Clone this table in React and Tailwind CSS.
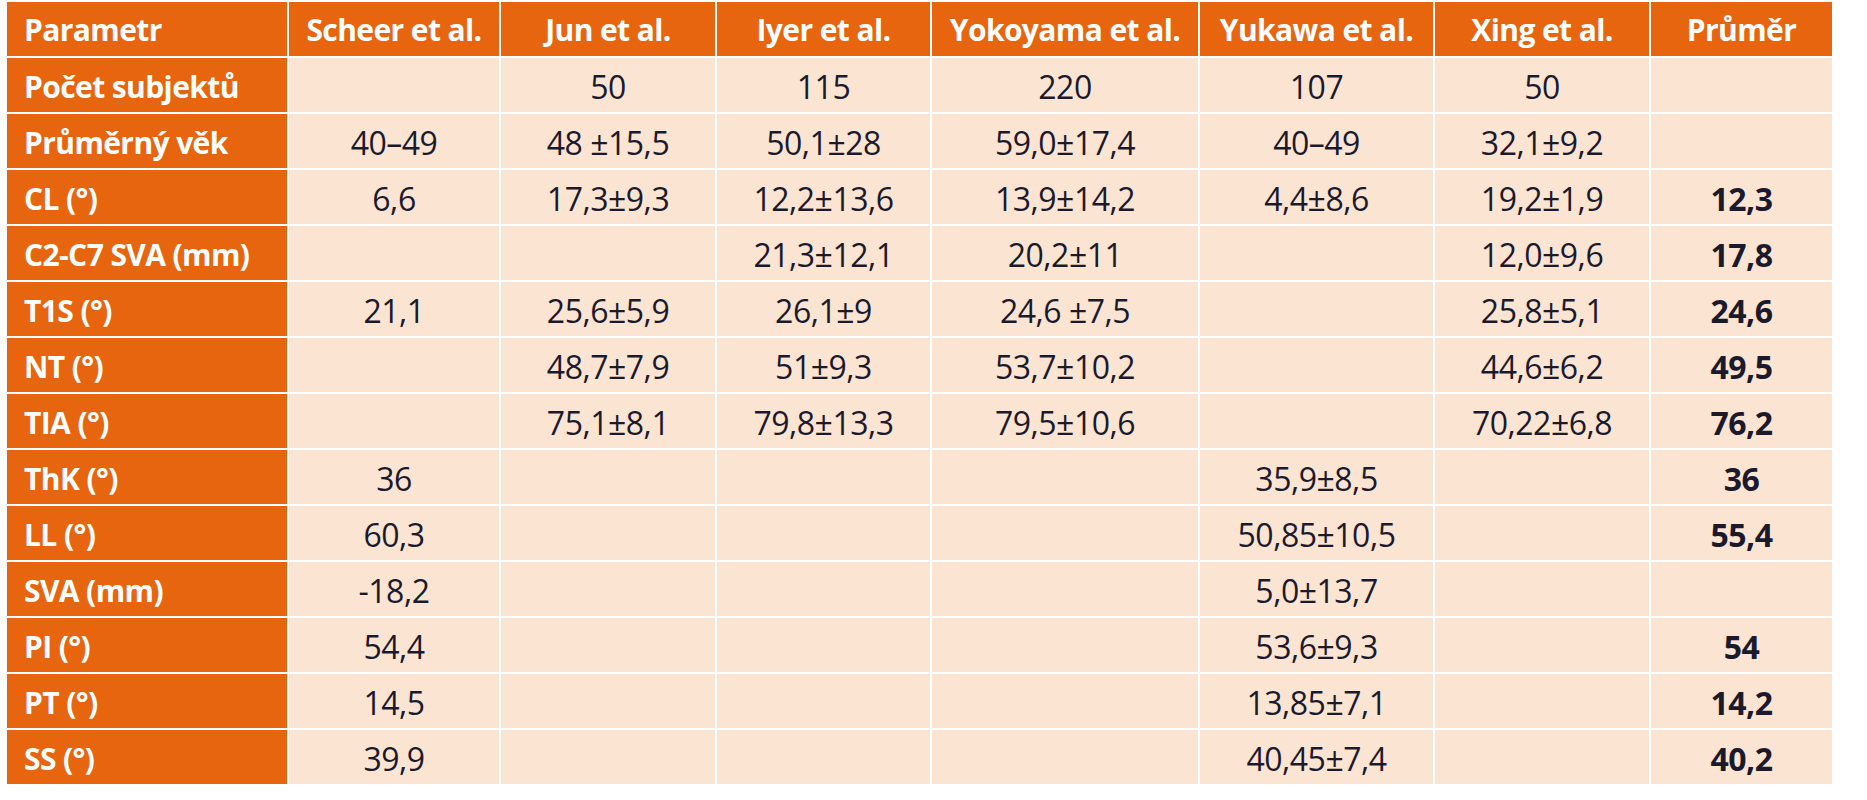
import React from "react";

const headers = ["Parametr", "Scheer et al.", "Jun et al.", "Iyer et al.", "Yokoyama et al.", "Yukawa et al.", "Xing et al.", "Průměr"];

const rows = [
  ["Počet subjektů", "", "50", "115", "220", "107", "50", ""],
  ["Průměrný věk", "40–49", "48 ±15,5", "50,1±28", "59,0±17,4", "40–49", "32,1±9,2", ""],
  ["CL (°)", "6,6", "17,3±9,3", "12,2±13,6", "13,9±14,2", "4,4±8,6", "19,2±1,9", "12,3"],
  ["C2-C7 SVA (mm)", "", "", "21,3±12,1", "20,2±11", "", "12,0±9,6", "17,8"],
  ["T1S (°)", "21,1", "25,6±5,9", "26,1±9", "24,6 ±7,5", "", "25,8±5,1", "24,6"],
  ["NT (°)", "", "48,7±7,9", "51±9,3", "53,7±10,2", "", "44,6±6,2", "49,5"],
  ["TIA (°)", "", "75,1±8,1", "79,8±13,3", "79,5±10,6", "", "70,22±6,8", "76,2"],
  ["ThK (°)", "36", "", "", "", "35,9±8,5", "", "36"],
  ["LL (°)", "60,3", "", "", "", "50,85±10,5", "", "55,4"],
  ["SVA (mm)", "-18,2", "", "", "", "5,0±13,7", "", ""],
  ["PI (°)", "54,4", "", "", "", "53,6±9,3", "", "54"],
  ["PT (°)", "14,5", "", "", "", "13,85±7,1", "", "14,2"],
  ["SS (°)", "39,9", "", "", "", "40,45±7,4", "", "40,2"],
];

export default function App() {
  return (
    <div className="min-h-[800px] w-[1867px] bg-white pt-[2px] pl-[7px]" style={{ fontFamily: '"Open Sans", "Noto Sans", sans-serif' }}>
      <div className="grid grid-cols-[280px_210px_214px_213px_266px_233px_214px_181px] gap-[2px] auto-rows-[54px]">
        {headers.map((h, i) => (
          <div
            key={"h" + i}
            className={
              "flex items-center bg-[#e8650f] text-white font-bold text-[30px] tracking-[-0.6px] " +
              (i === 0 ? "justify-start pl-[17px]" : "justify-center")
            }
          >
            {h}
          </div>
        ))}
        {rows.map((r, ri) =>
          r.map((c, ci) =>
            ci === 0 ? (
              <div key={ri + "-" + ci} className="flex items-center justify-start pl-[17px] pt-[2px] bg-[#e8650f] text-white font-bold text-[30px] tracking-[-0.6px]">
                {c}
              </div>
            ) : (
              <div
                key={ri + "-" + ci}
                className={
                  "flex items-center justify-center pt-[4px] bg-[#fce4d2] text-[#1a1a2c] text-[32px] tracking-[-0.5px] " +
                  (ci === 7 ? "font-bold" : "font-normal")
                }
              >
                {c}
              </div>
            )
          )
        )}
      </div>
    </div>
  );
}
